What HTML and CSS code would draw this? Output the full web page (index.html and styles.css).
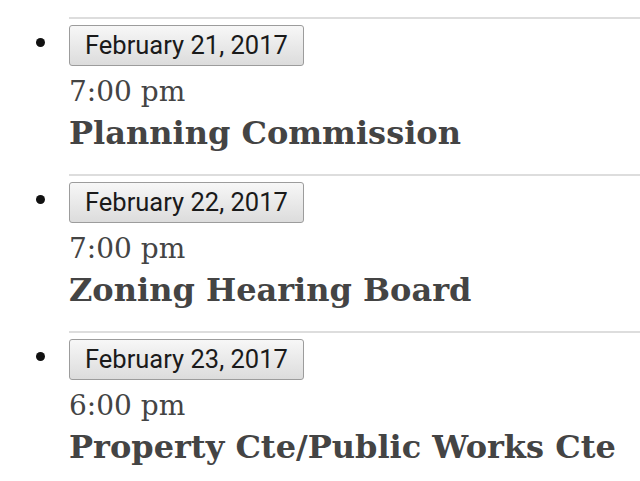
FILE: index.html
```html
<!DOCTYPE html>
<html lang="en">
<head>
<meta charset="utf-8">
<title>Meetings</title>
<link rel="stylesheet" href="styles.css">
</head>
<body>
<ul class="events">
  <li class="event">
    <div class="event-body">
      <button class="date-btn" type="button">February 21, 2017</button>
      <div class="time">7:00 pm</div>
      <div class="title">Planning Commission</div>
    </div>
  </li>
  <li class="event">
    <div class="event-body">
      <button class="date-btn" type="button">February 22, 2017</button>
      <div class="time">7:00 pm</div>
      <div class="title">Zoning Hearing Board</div>
    </div>
  </li>
  <li class="event">
    <div class="event-body">
      <button class="date-btn" type="button">February 23, 2017</button>
      <div class="time">6:00 pm</div>
      <div class="title">Property Cte/Public Works Cte</div>
    </div>
  </li>
</ul>
</body>
</html>
```
FILE: styles.css
```css
html, body {
  margin: 0;
  padding: 0;
  background: #ffffff;
}

.events {
  list-style: none;
  margin: 17px 0 0 0;
  padding: 0;
}

.event {
  display: flex;
  align-items: flex-start;
}

.event::before {
  content: "";
  flex: 0 0 9px;
  width: 9px;
  height: 9px;
  margin: 21px 24px 0 36px;
  border-radius: 50%;
  background: #111;
}

.event-body {
  flex: 1;
  display: flex;
  flex-direction: column;
  align-items: flex-start;
  border-top: 2px solid #dddddd;
  padding-top: 6px;
  padding-bottom: 21px;
}

.date-btn {
  font-family: Roboto, "Liberation Sans", sans-serif;
  font-size: 25.5px;
  line-height: 31px;
  height: 41px;
  padding: 4px 15px;
  margin: 0;
  color: #1a1a1a;
  border: 1px solid #9c9c9c;
  border-radius: 3px;
  background: linear-gradient(#f7f7f7, #dcdcdc);
  box-sizing: border-box;
}

.time {
  font-family: "DejaVu Serif", "Liberation Serif", serif;
  font-size: 28px;
  line-height: 40px;
  margin-top: 6px;
  color: #444444;
}

.title {
  font-family: "DejaVu Serif", "Liberation Serif", serif;
  font-weight: bold;
  font-size: 32px;
  line-height: 40px;
  margin-top: 1px;
  color: #444444;
}
```
